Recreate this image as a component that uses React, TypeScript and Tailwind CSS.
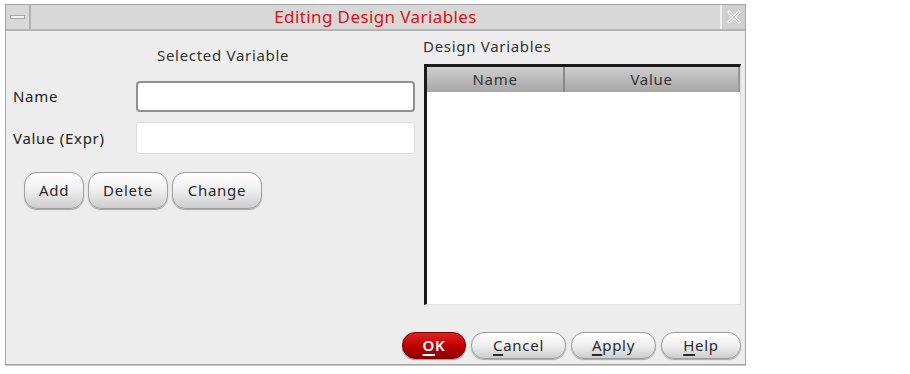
import React from "react";

function PushButton({ label, underline, w, h, primary }: { label: string; underline?: number; w: number; h: number; primary?: boolean }) {
  const chars = label.split("");
  return (
    <button
      className={
        primary
          ? "flex items-center justify-center rounded-[13px] border border-[#7a0000] bg-gradient-to-b from-[#e02020] via-[#c00000] to-[#8e0000] text-white font-semibold shadow-[0_1px_1px_rgba(0,0,0,0.35)]"
          : "flex items-center justify-center rounded-[13px] border border-[#9c9c9c] bg-gradient-to-b from-[#ffffff] via-[#efefef] to-[#cdcdcd] text-[#2a2a2a] font-[450] shadow-[0_1px_1px_rgba(0,0,0,0.3)]"
      }
      style={{ width: w, height: h }}
    >
      <span className="text-[15px] tracking-[0.7px] leading-none">
        {chars.map((c, i) => (
          <span key={i} className={i === underline ? "underline underline-offset-[3px] decoration-[2px]" : ""}>
            {c}
          </span>
        ))}
      </span>
    </button>
  );
}

export default function App() {
  return (
    <div className="w-[910px] h-[374px] bg-white pt-[4px] pl-[5px] font-['Noto_Sans',sans-serif]">
      <div className="w-[741px] h-[361px] border border-[#a4a4a4] bg-[#ededed] flex flex-col shadow-[0_1px_0_#c8c8c8]">
        {/* title bar */}
        <div className="h-[26px] flex bg-[#d8d8d8] border-b-2 border-[#b4b4b4]">
          <div className="w-[25px] border-r-2 border-[#b0b0b0] flex items-center justify-center">
            <div className="w-[15px] h-[4px] bg-[#f4f4f4] border border-[#a8a8a8]" />
          </div>
          <div className="flex-1 flex items-center justify-center text-[17px] tracking-[0.4px] text-[#e01010]">
            Editing Design Variables
          </div>
          <div className="w-[25px] border-l-2 border-[#f0f0f0] bg-[#d0d0d0] flex items-center justify-center">
            <svg width="14" height="14" viewBox="0 0 14 14">
              <path d="M2 2 L12 12 M12 2 L2 12" stroke="#f6f6f6" strokeWidth="3" strokeLinecap="round" />
              <path d="M2 2 L12 12 M12 2 L2 12" stroke="#bdbdbd" strokeWidth="1" />
            </svg>
          </div>
        </div>

        {/* body */}
        <div className="flex text-[15px] tracking-[0.7px] font-[450]">
          {/* left column */}
          <div className="w-[413px] flex flex-col">
            <div className="pt-[14px] pl-[151px] h-[33px] text-[#333] leading-[20px]">Selected Variable</div>
            <div className="mt-[17px] flex items-center">
              <div className="w-[130px] pl-[7px] text-[#222]">Name</div>
              <div className="w-[279px] h-[31px] rounded-[4px] border-2 border-[#909090] bg-white" />
            </div>
            <div className="mt-[10px] flex items-center">
              <div className="w-[130px] pl-[7px] text-[#222]">Value (Expr)</div>
              <div className="w-[279px] h-[32px] rounded-[3px] border border-[#dcdcdc] bg-white" />
            </div>
            <div className="mt-[18px] pl-[18px] flex gap-[4px]">
              <PushButton label="Add" w={60} h={37} />
              <PushButton label="Delete" w={80} h={37} />
              <PushButton label="Change" w={90} h={37} />
            </div>
          </div>

          {/* right column */}
          <div className="flex-1 flex flex-col pl-[4px]">
            <div className="pt-[5px] h-[33px] text-[#333] leading-[20px]">Design Variables</div>
            <div className="ml-[1px] w-[317px] h-[241px] border-t-[3px] border-l-[3px] border-[#1a1a1a] border-r border-b border-r-[#d8d8d8] border-b-[#e4e4e4] bg-white flex flex-col">
              <div className="h-[25px] flex bg-gradient-to-b from-[#cfcfcf] to-[#a6a6a6] text-[#333]">
                <div className="w-[138px] flex items-center justify-center border-r-2 border-[#888]">Name</div>
                <div className="flex-1 flex items-center justify-center border-r-2 border-[#999]">Value</div>
              </div>
              <div className="flex-1" />
            </div>
          </div>
        </div>

        {/* footer */}
        <div className="mt-[27px] pr-[4px] flex justify-end gap-[5px]">
          <PushButton label="OK" underline={0} w={64} h={27} primary />
          <PushButton label="Cancel" underline={0} w={95} h={27} />
          <PushButton label="Apply" underline={0} w={85} h={27} />
          <PushButton label="Help" underline={0} w={80} h={27} />
        </div>
      </div>
    </div>
  );
}
